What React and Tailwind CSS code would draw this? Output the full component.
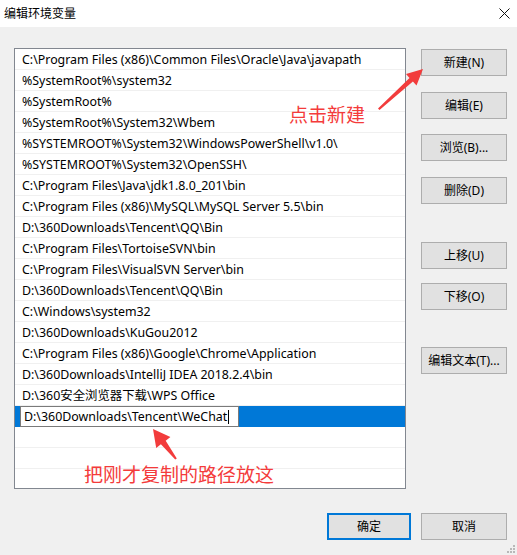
const paths = [
  'C:\\Program Files (x86)\\Common Files\\Oracle\\Java\\javapath',
  '%SystemRoot%\\system32',
  '%SystemRoot%',
  '%SystemRoot%\\System32\\Wbem',
  '%SYSTEMROOT%\\System32\\WindowsPowerShell\\v1.0\\',
  '%SYSTEMROOT%\\System32\\OpenSSH\\',
  'C:\\Program Files\\Java\\jdk1.8.0_201\\bin',
  'C:\\Program Files (x86)\\MySQL\\MySQL Server 5.5\\bin',
  'D:\\360Downloads\\Tencent\\QQ\\Bin',
  'C:\\Program Files\\TortoiseSVN\\bin',
  'C:\\Program Files\\VisualSVN Server\\bin',
  'D:\\360Downloads\\Tencent\\QQ\\Bin',
  'C:\\Windows\\system32',
  'D:\\360Downloads\\KuGou2012',
  'C:\\Program Files (x86)\\Google\\Chrome\\Application',
  'D:\\360Downloads\\IntelliJ IDEA 2018.2.4\\bin',
  'D:\\360安全浏览器下载\\WPS Office',
];

const font = { fontFamily: '"Noto Sans", "Noto Sans CJK SC", sans-serif' };

function Btn({ children, primary, className = '' }) {
  return (
    <button
      className={
        (primary
          ? 'block w-[84px] h-[27px] bg-[#e1e1e1] border-2 border-[#0078d7] text-[12px] text-black '
          : 'block w-[86px] h-[27px] bg-[#e1e1e1] border border-[#adadad] text-[12px] text-black ') + className
      }
    >
      {children}
    </button>
  );
}

export default function App() {
  return (
    <div className="relative w-[517px] h-[555px] bg-[#f0f0f0] overflow-hidden select-none" style={font}>
      {/* title bar */}
      <div className="h-[27px] bg-white flex items-center justify-between pl-[4px] pr-[6px]">
        <span className="text-[12px] text-black">编辑环境变量</span>
        <svg width="11" height="11" viewBox="0 0 11 11" className="mr-[1px]">
          <path d="M0.5 0.5L10.5 10.5M10.5 0.5L0.5 10.5" stroke="#111" strokeWidth="1" />
        </svg>
      </div>

      <div className="flex gap-[15px] pl-[14px] pt-[21px]">
        {/* list */}
        <div className="w-[392px] h-[441px] bg-white border border-[#828790] overflow-hidden">
          {paths.map((p, i) => (
            <div key={i} className="h-[21px] border-b border-[#f0f0f0] flex items-center pt-[2px] pl-[7px] text-[12.4px] text-black whitespace-nowrap">
              {p}
            </div>
          ))}
          <div className="h-[21px] bg-[#0078d7] flex items-center pl-[5px]">
            <div className="w-[219px] h-[21px] bg-white border border-[#7a7a7a] flex items-center pt-px pl-[3px] text-[12.4px] text-black whitespace-nowrap">
              D:\360Downloads\Tencent\WeChat<span className="w-px h-[14px] bg-black ml-px" />
            </div>
          </div>
          {[0, 1, 2].map((i) => (
            <div key={i} className="h-[21px] border-b border-[#f0f0f0]" />
          ))}
        </div>

        {/* buttons */}
        <div className="flex flex-col pt-px">
          <Btn>新建(N)</Btn>
          <Btn className="mt-[16px]">编辑(E)</Btn>
          <Btn className="mt-[15px]">浏览(B)...</Btn>
          <Btn className="mt-[16px]">删除(D)</Btn>
          <Btn className="mt-[38px]">上移(U)</Btn>
          <Btn className="mt-[14px]">下移(O)</Btn>
          <Btn className="mt-[37px]">编辑文本(T)...</Btn>
        </div>
      </div>

      <div className="flex justify-end gap-[10px] pr-[10px] mt-[24px]">
        <Btn primary>确定</Btn>
        <Btn>取消</Btn>
      </div>

      {/* resize grip */}
      <svg className="absolute right-[1px] bottom-[1px]" width="10" height="10" viewBox="0 0 10 10">
        <g fill="#b8b8b8">
          <rect x="7" y="1" width="2" height="2" />
          <rect x="4" y="4" width="2" height="2" />
          <rect x="7" y="4" width="2" height="2" />
          <rect x="1" y="7" width="2" height="2" />
          <rect x="4" y="7" width="2" height="2" />
          <rect x="7" y="7" width="2" height="2" />
        </g>
      </svg>

      {/* annotations */}
      <svg className="absolute left-0 top-0 pointer-events-none" width="517" height="555">
        <polygon
          fill="#f23c3c"
          points="379.5,110 412.9,81.6 416.5,85.5 423,69 406,74 409.5,77.9 378,108.4"
        />
        <polygon
          fill="#f23c3c"
          points="176.8,458.6 165.7,440.7 170.4,437 153,429 156.2,448 160.9,444.3 175.2,459.6"
        />
      </svg>
      <div className="absolute left-[289px] top-[106px] text-[19px] leading-none text-[#f43b3b]">点击新建</div>
      <div className="absolute left-[84px] top-[466px] text-[19px] leading-none text-[#f43b3b]">把刚才复制的路径放这</div>
    </div>
  );
}
